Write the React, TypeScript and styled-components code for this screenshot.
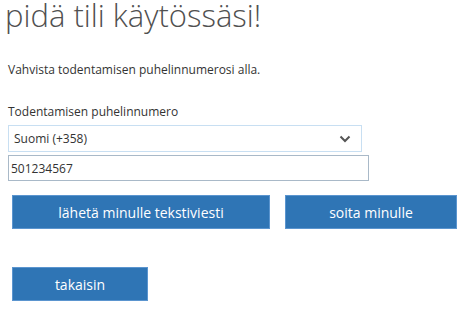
import React from "react";
import styled, { createGlobalStyle } from "styled-components";

const Global = createGlobalStyle`
  html, body { margin: 0; padding: 0; background: #fff; }
  body { font-family: "Open Sans", "Noto Sans", sans-serif; color: #333; }
`;

const Page = styled.div`
  width: 472px;
  height: 312px;
  overflow: hidden;
  padding: 0 8px;
  box-sizing: border-box;
  display: flex;
  flex-direction: column;
`;

const Title = styled.h1`
  margin: 0 0 0 -3px;
  font-family: "Open Sans", sans-serif;
  font-weight: 300;
  font-size: 31px;
  line-height: 31px;
  color: #505050;
  white-space: nowrap;
`;

const Intro = styled.p`
  margin: 31px 0 0;
  font-size: 12px;
  line-height: 16px;
  color: #333;
`;

const Label = styled.label`
  margin-top: 26px;
  font-size: 12px;
  line-height: 16px;
  color: #333;
`;

const SelectBox = styled.div`
  margin-top: 5px;
  width: 354px;
  height: 27px;
  box-sizing: border-box;
  border: 1px solid #c8dff2;
  display: flex;
  align-items: center;
  justify-content: space-between;
  padding: 0 10px 0 5px;
  font-size: 12px;
  color: #333;
`;

const Input = styled.div`
  margin-top: 3px;
  width: 361px;
  height: 26px;
  box-sizing: border-box;
  border: 1px solid #a9b9c8;
  display: flex;
  align-items: center;
  padding: 0 2px;
  font-size: 12px;
  color: #333;
`;

const ButtonRow = styled.div`
  margin-top: 14px;
  display: flex;
  gap: 15px;
  padding-left: 4px;
`;

const Button = styled.button<{ $w: number }>`
  width: ${(p) => p.$w}px;
  height: 34px;
  box-sizing: border-box;
  background: #2f75b5;
  border: 1px solid #5b95cf;
  color: #fff;
  font-family: "Open Sans", sans-serif;
  font-size: 14px;
  padding: 0;
  display: flex;
  align-items: center;
  justify-content: center;
`;

const BackRow = styled.div`
  margin-top: 38px;
  padding-left: 4px;
`;

const Chevron = () => (
  <svg width="12" height="8" viewBox="0 0 12 8">
    <path d="M1.5 1.5 L6 6 L10.5 1.5" fill="none" stroke="#555" strokeWidth="2" />
  </svg>
);

export default function App() {
  return (
    <>
      <Global />
      <Page>
        <Title>pidä tili käytössäsi!</Title>
        <Intro>Vahvista todentamisen puhelinnumerosi alla.</Intro>
        <Label>Todentamisen puhelinnumero</Label>
        <SelectBox>
          <span>Suomi (+358)</span>
          <Chevron />
        </SelectBox>
        <Input>501234567</Input>
        <ButtonRow>
          <Button $w={258}>lähetä minulle tekstiviesti</Button>
          <Button $w={172}>soita minulle</Button>
        </ButtonRow>
        <BackRow>
          <Button $w={136}>takaisin</Button>
        </BackRow>
      </Page>
    </>
  );
}
